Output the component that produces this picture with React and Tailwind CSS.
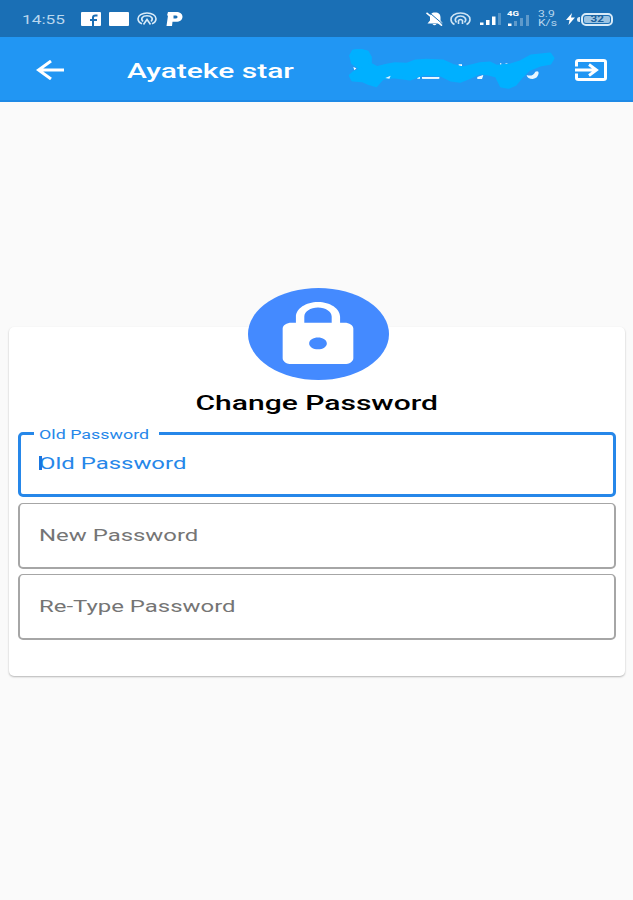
import React from 'react';

function StatusBar() {
  return (
    <div className="flex h-[37px] items-center bg-[#1a6fb5] pl-[22px] pr-[20px] pt-px text-white">
      <div className="w-[59px]">
        <span className="inline-block origin-left scale-x-[1.38] whitespace-nowrap text-[12.5px] leading-5 text-[#b9d7ee]">14:55</span>
      </div>

      {/* Notification icons */}
      <svg className="h-[14px] w-[20px]" viewBox="0 0 20 14">
        <rect width="20" height="14" rx="1" fill="#fff" />
        <path d="M12 14V5.500q0-2 2.500-2h2M9 8h7" fill="none" stroke="#1a6fb5" strokeWidth="2" />
      </svg>
      <svg className="ml-2 h-[14px] w-[20px]" viewBox="0 0 20 14">
        <rect width="20" height="14" rx="1" fill="#fff" />
      </svg>
      <svg className="ml-2 h-[14px] w-[20px]" viewBox="0 0 20 14" fill="none" stroke="#d9ebf8" strokeWidth="1.600">
        <path d="M5 11.800C2.300 10.700 1 9 1 6.800 1 3.500 5 1 10 1s9 2.500 9 5.800c0 2.200-1.300 3.900-4 5" />
        <path d="M6 9.500C3.200 6.500 5.500 3.800 10 3.800s6.800 2.700 4 5.700M6.500 12.500 10 7.500l3.500 5" />
      </svg>
      <svg className="ml-[9px] h-[14px] w-[17px]" viewBox="0 0 17 14">
        <path fillRule="evenodd" d="M2 0h8c4 0 6.500 1.800 6.500 4.800S14 9.800 10 9.800H6.500L6 14H.5L2 3.500H1zM7.500 3.500v3H10c2 0 2-3 0-3z" fill="#fff" />
      </svg>

      {/* Sound, hotspot, signal and battery */}
      <svg className="ml-auto h-[14px] w-[18px]" viewBox="0 0 18 14">
        <path d="M9 .5c4 0 5.500 2 5.500 5v3L17 11.500H1.500L4 8.500v-3C4 2.500 5.500.5 9 .5zM6.500 12h4q-2 2.500-4 0z" fill="#fff" />
        <path d="M2.500-.2 17.500 12.700" stroke="#1a6fb5" strokeWidth="1" />
        <path d="M.5.800 16 13.700" stroke="#fff" strokeWidth="1.500" />
      </svg>
      <svg className="ml-[6px] h-[14px] w-[21px]" viewBox="0 0 21 14" fill="none" stroke="#cfe4f4" strokeWidth="1.600">
        <path d="M4.500 12.500C2 11.300 1 9.500 1 7.500 1 3.800 5 1 10.500 1S20 3.800 20 7.500c0 2-1 3.800-3.500 5" />
        <path d="M6.500 10.500C3.500 7 6.500 4 10.500 4s7 3 4 6.500M8.500 12V8.500q2-2 4 0V12" />
      </svg>
      <svg className="ml-[9px] h-[14px] w-[21px]" viewBox="0 0 21 14" fill="#fff">
        <path d="M0 10.500h3.500V13H0zM6 8h3.500v5H6zM12 4.500h3.500V13H12z" />
        <path d="M18 1h3v12h-3z" opacity=".25" />
      </svg>
      <div className="ml-[6px] flex h-[18px] w-[24px] flex-col">
        <span className="h-[8px] w-[11px] origin-left scale-x-[1.2] text-[8px] font-bold leading-[8px]">4G</span>
        <svg className="-mt-[3px] h-[13px] w-[24px]" viewBox="0 0 24 13" fill="#fff">
          <path d="M1 8.500h3.500V11H1z" />
          <path d="M7 6h3v5H7zM13 3h3v8h-3zM19 0h3v11h-3z" opacity=".3" />
        </svg>
      </div>
      <div className="ml-[7px] flex w-[21px] flex-col text-[9px] leading-[9px] text-[#b9d7ee]">
        <span className="h-[9px] w-[14px] origin-left scale-x-[1.35]">3.9</span>
        <span className="h-[9px] w-[14px] origin-left scale-x-[1.35]">K/s</span>
      </div>
      <svg className="ml-[7px] h-[12px] w-[9px]" viewBox="0 0 9 12">
        <path d="M6 0 0 7h3.500L2.500 12 9 4.500H5z" fill="#fff" />
      </svg>
      <div className="ml-[2px] h-[5px] w-[3px] rounded-l-sm bg-[#d9ebf8]" />
      <div className="ml-px flex h-[13px] w-[32px] items-center justify-center rounded-[5px] border-2 border-[#d9ebf8] p-px">
        <div className="flex h-full w-full items-center justify-center rounded-[2px] bg-[#9bc3e2]">
          <span className="inline-block scale-x-[1.3] text-[9px] font-bold leading-none text-[#1a5f9b]">32</span>
        </div>
      </div>
    </div>
  );
}

function AppBar() {
  return (
    <div className="flex h-[65px] items-center border-b-2 border-[#1e8ae6] bg-[#2196f3] pl-[36px] pr-[26px] text-white">
      <svg className="mt-[2px] h-[20px] w-[28px]" viewBox="0 0 28 20" fill="none" stroke="#fff" strokeWidth="3">
        <path d="M28 10H3M15 1 2.500 10 15 19" />
      </svg>
      <div className="ml-[63px] w-[221px] pt-[6px]">
        <span className="inline-block origin-left scale-x-[1.5] whitespace-nowrap text-[20px] font-medium leading-6">Ayateke star</span>
      </div>
      <svg className="h-[40px] w-[207px]" viewBox="24 40 621 120">
        <path d="M135 124l18-6-5 12h-13zM232 124h8v5h-8zM246 124h52v5h-52zM412 124l18-6-4 12h-14zM40 94l9 4-6 6zM356 86h10v6h-10zM480 83h4v8h-4zM492 86l10-4v9h-10z" fill="#fff" />
        <path
          d="M32 60 40 46 60 43 82 49 91 65 91 85 110 96 140 89 165 84 200 86 227 76 260 74 308 76 338 89 370 97 420 84 450 82 470 92 512 88 543 78 573 61 602 58 630 55 639 68 630 83 600 88 566 102 546 122 526 146 505 155 484 151 469 121 440 114 420 111 388 126 360 137 332 133 302 118 250 115 210 130 160 123 128 128 108 150 87 144 67 135 38 133 31 120 42 110 64 100 38 82z"
          fill="#00b0ff"
          stroke="#00b0ff"
          strokeWidth="9"
          strokeLinejoin="round"
        />
        <path d="M560 118q18 6 26-10 10-4 10 4-2 16-18 18-16 0-18-12z" fill="#e8f6ff" />
        <path d="M136 127l16-7-4 9zM412 128l16-8-4 9zM248 125h48v4h-48z" fill="#e8f6ff" />
      </svg>
      <svg className="ml-[20px] mt-[2px] h-[22px] w-[32px]" viewBox="0 0 32 22" fill="none" stroke="#fff">
        <path d="M1.500 7.500V3q0-1.500 2-1.500h25q2 0 2 1.500v16q0 1.500-2 1.500h-25q-2 0-2-1.500v-4.500" strokeWidth="3" />
        <path d="M0 11h21M14 5.500 21.500 11 14 16.500" strokeWidth="2.800" />
      </svg>
    </div>
  );
}

function PasswordField({ label }) {
  return (
    <div className="flex h-[66px] items-center rounded-[5px] border-2 border-t-[1.5px] border-[#a6a6a6] pl-[19px] pt-px">
      <span className="inline-block origin-left scale-x-[1.45] whitespace-nowrap text-[16.5px] leading-5 text-[#757575]">{label}</span>
    </div>
  );
}

function App() {
  return (
    <div className="min-h-[900px] w-full overflow-hidden bg-[#fafafa] font-['Roboto',sans-serif]">
      <StatusBar />
      <AppBar />

      {/* Change password card */}
      <div className="ml-[9px] mr-[8px] mt-[225px] h-[349px] rounded-[5px] bg-white px-[9px] shadow-[0_1px_2px_rgba(0,0,0,0.28)]">
        <div className="relative -top-[39px] left-px mx-auto -mb-[39px] flex h-[92px] w-[141px] items-center justify-center rounded-[50%] bg-[#448aff]">
          <svg className="h-[71px] w-[106px]" viewBox="0 0 24 24" preserveAspectRatio="none" fill="#fff">
            <path d="M18 8h-1V6c0-2.760-2.240-5-5-5S7 3.240 7 6v2H6c-1.100 0-2 .9-2 2v10c0 1.100.9 2 2 2h12c1.100 0 2-.9 2-2V10c0-1.100-.9-2-2-2zm-6 9c-1.100 0-2-.9-2-2s.9-2 2-2 2 .9 2 2-.9 2-2 2zm3.100-9H8.900V6c0-1.710 1.390-3.100 3.100-3.100 1.710 0 3.100 1.390 3.100 3.100v2z" />
          </svg>
        </div>
        <h1 className="flex h-[52px] items-center justify-center pb-[4px]">
          <span className="inline-block scale-x-[1.54] whitespace-nowrap text-[19.5px] font-medium leading-6 text-black">Change Password</span>
        </h1>

        <div className="flex flex-col gap-[5px]">
          <div className="relative mb-px flex h-[65px] items-center rounded-[5px] border-[3px] border-[#2687e9] pb-px pl-[18px]">
            <div className="absolute -top-[7px] left-[13px] h-[14px] w-[125px] bg-white pl-[5px]">
              <span className="inline-block origin-left scale-x-[1.43] whitespace-nowrap align-top text-[12.5px] leading-[14px] text-[#2687e9]">Old Password</span>
            </div>
            <span className="inline-block origin-left scale-x-[1.45] whitespace-nowrap text-[16.5px] leading-5 text-[#2687e9]">Old Password</span>
            <div className="absolute left-[18px] top-[21px] h-[14px] w-[3px] bg-[#1976e0]" />
          </div>
          <PasswordField label="New Password" />
          <PasswordField label="Re-Type Password" />
        </div>
      </div>
    </div>
  );
}

export default App;
